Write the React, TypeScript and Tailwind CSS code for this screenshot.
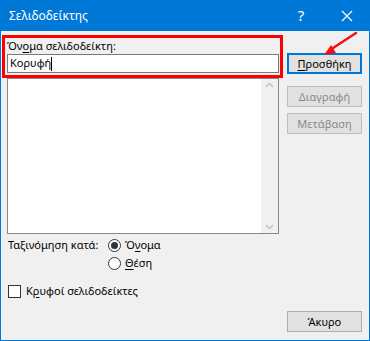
import React, { useState } from "react";

function DialogButton({
  label,
  accessKey,
  disabled,
  primary,
}: {
  label: string;
  accessKey?: number;
  disabled?: boolean;
  primary?: boolean;
}) {
  const chars = label.split("");
  return (
    <button
      type="button"
      disabled={disabled}
      className={`w-[75px] h-[21px] flex items-center justify-center text-[11px] leading-none ${
        primary
          ? "border-2 border-[#0078d7] bg-[#e1e1e1] text-black"
          : disabled
          ? "border border-[#bfbfbf] bg-[#e1e1e1] text-[#8a8a8a]"
          : "border border-[#adadad] bg-[#e1e1e1] text-black"
      }`}
    >
      {chars.map((c, i) =>
        i === accessKey ? (
          <span key={i} className="underline underline-offset-2">
            {c}
          </span>
        ) : (
          <span key={i}>{c}</span>
        )
      )}
    </button>
  );
}

export default function App() {
  const [sortBy, setSortBy] = useState("name");
  const [hidden, setHidden] = useState(false);

  return (
    <div
      className="w-[370px] h-[341px] flex flex-col bg-[#f0f0f0] text-[11px] text-black select-none relative"
      style={{ fontFamily: '"Noto Sans", "Open Sans", sans-serif' }}
    >
      {/* title bar */}
      <div className="h-[31px] bg-[#0078d7] flex items-center text-white shrink-0">
        <span className="pl-[9px] text-[12px] flex-1">Σελιδοδείκτης</span>
        <span className="w-[46px] text-center text-[15px]">?</span>
        <span className="w-[46px] flex justify-center">
          <svg width="12" height="12" viewBox="0 0 12 12">
            <path d="M1 1L11 11M11 1L1 11" stroke="white" strokeWidth="1.2" />
          </svg>
        </span>
      </div>

      <div className="flex-1 border-x border-b border-[#0078d7] flex flex-col pl-[6px] pr-[6px]">
        <div className="flex gap-[8px]">
          {/* left column */}
          <div className="w-[272px] flex flex-col">
            <label className="h-[22px] flex items-end pb-[2px] leading-none">
              Όν<span className="underline underline-offset-2">ο</span>μα σελιδοδείκτη:
            </label>
            <div className="mt-[1px] h-[19px] border border-[#7a7a7a] bg-white px-[2px] flex items-center text-[11px]">
              <span>Κορυφή</span>
              <span className="w-[1px] h-[14px] bg-black" />
            </div>
            <div className="mt-[5px] h-[156px] border border-[#828790] bg-white flex justify-end">
              <div className="w-[17px] flex flex-col items-center justify-between py-[3px] bg-[#f0f0f0]">
                <svg width="9" height="6" viewBox="0 0 9 6">
                  <path d="M1 5L4.5 1.5L8 5" stroke="#c2c2c2" strokeWidth="1.5" fill="none" />
                </svg>
                <svg width="9" height="6" viewBox="0 0 9 6">
                  <path d="M1 1L4.5 4.5L8 1" stroke="#c2c2c2" strokeWidth="1.5" fill="none" />
                </svg>
              </div>
            </div>
          </div>

          {/* right column */}
          <div className="flex flex-col pt-[22px] gap-[12px]">
            <DialogButton label="Προσθήκη" accessKey={0} primary />
            <div className="flex flex-col gap-[6px]">
              <DialogButton label="Διαγραφή" disabled />
              <DialogButton label="Μετάβαση" disabled />
            </div>
          </div>
        </div>

        {/* sort options */}
        <div className="mt-[2px] flex">
          <span className="w-[101px] h-[18px] flex items-center pl-[1px]">Ταξινόμηση κατά:</span>
          <div className="flex flex-col">
            {[
              { id: "name", parts: ["Ό", "ν", "ομα"] },
              { id: "pos", parts: ["", "Θ", "έση"] },
            ].map((o) => (
              <label
                key={o.id}
                className="h-[18px] flex items-center gap-[4px]"
                onClick={() => setSortBy(o.id)}
              >
                <span className="w-[13px] h-[13px] rounded-full border border-[#333] bg-white flex items-center justify-center">
                  {sortBy === o.id && <span className="w-[7px] h-[7px] rounded-full bg-[#333]" />}
                </span>
                <span>
                  {o.parts[0]}
                  <span className="underline underline-offset-2">{o.parts[1]}</span>
                  {o.parts[2]}
                </span>
              </label>
            ))}
          </div>
        </div>

        {/* hidden bookmarks */}
        <label
          className="mt-[12px] h-[14px] flex items-center gap-[5px] pl-[1px]"
          onClick={() => setHidden(!hidden)}
        >
          <span className="w-[13px] h-[13px] border border-[#333] bg-white flex items-center justify-center">
            {hidden && (
              <svg width="9" height="9" viewBox="0 0 9 9">
                <path d="M1 4.5L3.5 7L8 1.5" stroke="#333" strokeWidth="1.4" fill="none" />
              </svg>
            )}
          </span>
          <span>
            Κ<span className="underline underline-offset-2">ρ</span>υφοί σελιδοδείκτες
          </span>
        </label>

        <div className="flex-1 flex items-end justify-end pb-[8px] pr-[1px]">
          <DialogButton label="Άκυρο" />
        </div>
      </div>

      {/* annotation overlays */}
      <div className="absolute left-[2px] top-[35px] w-[281px] h-[43px] border-[3px] border-[#ff0000] pointer-events-none" />
      <svg className="absolute left-[318px] top-[30px] pointer-events-none" width="42" height="30" viewBox="0 0 42 30">
        <path d="M38 3L12 20" stroke="#ee1111" strokeWidth="2.5" strokeLinecap="round" />
        <path d="M6 25L18 23L13 15Z" fill="#ee1111" />
      </svg>
    </div>
  );
}
